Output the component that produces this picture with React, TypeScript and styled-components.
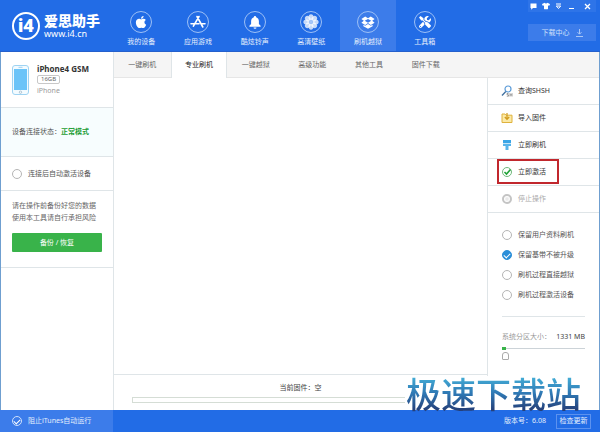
import React from "react";
import styled, { createGlobalStyle, css } from "styled-components";
import { FaApple, FaTools, FaTshirt } from "react-icons/fa";

const BLUE = "#226ce6";
const BLUE_LIGHT = "#3c7cea";
const LINE = "#dfe5e8";

const GlobalStyle = createGlobalStyle`
  * { box-sizing: border-box; }
  body {
    margin: 0;
    background: #fff;
    color: #444;
    font: 7px/12px "Noto Sans", "Noto Sans CJK SC", sans-serif;
  }
  button, input { font: inherit; color: inherit; margin: 0; }
  button { border: 0; padding: 0; background: none; cursor: pointer; }
  svg { display: block; flex: none; }
`;

const Window = styled.div`
  position: relative;
  display: flex;
  flex-direction: column;
  min-height: 100vh;
`;

/* ---------- header ---------- */
const Header = styled.header`
  display: grid;
  grid-template-columns: 113px 340px 1fr;
  height: 52px;
  background: ${BLUE};
  color: #fff;
  border-bottom: 1px solid #2560cc;
`;

const Brand = styled.a`
  display: flex;
  align-items: center;
  gap: 4px;
  padding-left: 12px;
  color: #fff;
  text-decoration: none;
`;

const BrandMark = styled.span`
  display: grid;
  place-items: center;
  width: 28px;
  height: 28px;
  flex: none;
  border: 2px solid #fff;
  border-radius: 50%;
  font: 900 19px/22px Roboto, "Noto Sans", sans-serif;
`;

const BrandText = styled.span`
  display: flex;
  flex-direction: column;
`;

const BrandName = styled.strong`
  font-size: 14px;
  line-height: 15px;
  font-weight: 900;
  white-space: nowrap;
`;

const BrandSite = styled.span`
  font-size: 9px;
  line-height: 11px;
`;

const MainNav = styled.nav`
  display: grid;
  grid-template-columns: repeat(6, 1fr);
`;

const NavItem = styled.button<{ $active?: boolean }>`
  display: flex;
  flex-direction: column;
  align-items: center;
  gap: 3px;
  padding-top: 11px;
  color: #e4eefc;
  background: ${(p) => (p.$active ? BLUE_LIGHT : "transparent")};
`;

const Ring = styled.span`
  display: grid;
  place-items: center;
  width: 22px;
  height: 22px;
  border: 1px solid #9dc0f6;
  border-radius: 50%;
  color: #fff;
`;

const HeaderSide = styled.div`
  display: flex;
  flex-direction: column;
  align-items: flex-end;
  gap: 12px;
  padding-right: 4px;
`;

const WindowControls = styled.div`
  display: flex;
  justify-content: space-between;
  align-items: center;
  width: 68px;
  height: 12px;
  padding: 0 4px 0 1px;
  background: #2e74e8;
`;

const ControlButton = styled.button<{ $apart?: boolean }>`
  display: grid;
  place-items: center;
  width: 9px;
  height: 12px;
  color: #fff;
  margin-left: ${(p) => (p.$apart ? "4px" : "0")};
`;

const DownloadButton = styled.button`
  display: flex;
  align-items: center;
  justify-content: center;
  gap: 6px;
  width: 68px;
  height: 17px;
  background: ${BLUE_LIGHT};
  color: #d0e1fb;
`;

/* ---------- body ---------- */
const Body = styled.div`
  flex: 1;
  display: grid;
  grid-template-columns: 113px 1fr;
  border: solid #6f9fd0;
  border-width: 0 1px;
`;

const Sidebar = styled.aside`
  border-right: 1px solid ${LINE};
`;

const sideBlock = css`
  padding: 0 11px;
  border-bottom: 1px solid ${LINE};
`;

const Device = styled.section`
  ${sideBlock}
  display: flex;
  align-items: center;
  gap: 8px;
  height: 56px;
`;

const DeviceInfo = styled.div`
  display: flex;
  flex-direction: column;
  align-items: flex-start;
`;

const DeviceName = styled.strong`
  font-size: 8px;
  line-height: 12px;
  color: #333;
`;

const Capacity = styled.span`
  padding: 0 3px;
  border: 1px solid #c8c8c8;
  border-radius: 2px;
  font-size: 6px;
  line-height: 7px;
  color: #666;
`;

const DeviceKind = styled.span`
  color: #999;
  line-height: 13px;
`;

const Status = styled.section`
  ${sideBlock}
  display: flex;
  align-items: center;
  height: 49px;
  background: #f7fdfe;
  color: #555;
`;

const StatusValue = styled.strong`
  color: #1c9c33;
`;

const AutoActivate = styled.section`
  ${sideBlock}
  display: flex;
  align-items: center;
  height: 34px;
`;

const Backup = styled.section`
  ${sideBlock}
  padding-top: 9px;
  padding-bottom: 15px;
  color: #666;
`;

const Hint = styled.p`
  margin: 0 0 9px;
  white-space: nowrap;
`;

const BackupButton = styled.button`
  width: 100%;
  height: 19px;
  border-radius: 1px;
  background: #39b34a;
  color: #fff;
`;

const Check = styled.label`
  display: flex;
  align-items: center;
  gap: 6px;
  white-space: nowrap;
  color: #555;
`;

const Tick = styled.input.attrs({ type: "checkbox" })`
  appearance: none;
  display: grid;
  place-items: center;
  width: 10px;
  height: 10px;
  flex: none;
  border: 1px solid #b5b5b5;
  border-radius: 50%;
  background: #fff;
  &:checked {
    border-color: #2b8fd9;
    background: #2b8fd9;
  }
  &:checked::before {
    content: "";
    width: 5px;
    height: 3px;
    border: solid #fff;
    border-width: 0 0 1px 1px;
    rotate: -45deg;
  }
`;

const FooterTick = styled(Tick)`
  border-color: #cfe0fb;
  background: transparent;
  &:checked {
    border-color: #cfe0fb;
    background: transparent;
  }
`;

const Main = styled.main`
  display: grid;
  grid-template-columns: 1fr 112px;
  grid-template-rows: 26px 1fr;
`;

const TabBar = styled.div`
  grid-column: 1 / -1;
  display: grid;
  grid-template-columns: repeat(6, 1fr);
  padding-right: calc(100% - 340px);
  background: #f5f5f5;
  border-bottom: 1px solid #e6e6e6;
`;

const Tab = styled.button<{ $active?: boolean }>`
  height: 26px;
  color: #666;
  ${(p) =>
    p.$active &&
    css`
      background: #fff;
      color: #222;
      border: solid ${LINE};
      border-width: 0 1px;
    `}
`;

const Workspace = styled.section`
  display: flex;
  flex-direction: column;
`;

const Canvas = styled.div`
  flex: 1;
`;

const FirmwareBar = styled.div`
  display: flex;
  flex-direction: column;
  align-items: center;
  gap: 3px;
  height: 36px;
  padding: 7px 18px 0;
  border-top: 1px solid ${LINE};
`;

const Progress = styled.progress`
  appearance: none;
  display: block;
  width: 100%;
  height: 6px;
  border: 1px solid #d5ddd5;
  background: #fff;
  &::-webkit-progress-bar { background: #fff; }
  &::-webkit-progress-value { background: #39b34a; }
`;

const Tools = styled.aside`
  border-left: 1px solid ${LINE};
`;

const ToolButton = styled.button<{ $marked?: boolean }>`
  position: relative;
  display: flex;
  align-items: center;
  gap: 5px;
  width: 100%;
  height: 27px;
  padding-left: 13px;
  border-bottom: 1px solid ${LINE};
  color: #333;
  &:disabled { color: #aaa; cursor: default; }
  ${(p) =>
    p.$marked &&
    css`
      &::after {
        content: "";
        position: absolute;
        inset: 0 40px 1px 9px;
        border: 2px solid #c1272d;
      }
    `}
`;

const Options = styled.div`
  display: flex;
  flex-direction: column;
  gap: 8px;
  margin: 0 14px;
  padding: 16px 0 15px;
  border-bottom: 1px solid ${LINE};
`;

const Partition = styled.div`
  display: flex;
  flex-direction: column;
  margin: 0 14px;
  padding-top: 14px;
`;

const PartitionLabel = styled.label`
  display: flex;
  justify-content: space-between;
  color: #999;
  white-space: nowrap;
`;

const PartitionValue = styled.output`
  color: #444;
`;

const Slider = styled.input.attrs({ type: "range" })`
  appearance: none;
  width: 100%;
  height: 20px;
  background: linear-gradient(90deg, #39b34a 4px, transparent 4px) 0 4px / 100% 3px no-repeat,
    linear-gradient(#ccd3d8, #ccd3d8) 0 5px / 100% 1px no-repeat;
  &::-webkit-slider-thumb {
    appearance: none;
    width: 7px;
    height: 8px;
    margin-top: 6px;
    border: 1px solid #aaa;
    border-radius: 3px 3px 1px 1px;
    background: #fff;
  }
`;

/* ---------- footer ---------- */
const Footer = styled.footer`
  display: grid;
  grid-template-columns: 113px 1fr;
  height: 22px;
  background: ${BLUE};
  color: #e4eefc;
`;

const FooterLeft = styled.div`
  display: flex;
  align-items: center;
  padding-left: 12px;
  background: ${BLUE_LIGHT};
  label { color: #e4eefc; }
`;

const FooterRight = styled.div`
  display: flex;
  align-items: center;
  justify-content: flex-end;
  gap: 10px;
  padding-right: 9px;
`;

const UpdateButton = styled.button`
  width: 35px;
  height: 15px;
  border: 1px solid #5c92ef;
  white-space: nowrap;
`;

const Watermark = styled.div`
  position: absolute;
  right: 18px;
  bottom: 22px;
  height: 34px;
  padding: 0 1px;
  background: #fff;
  font: 500 35px/34px "Noto Sans CJK SC", sans-serif;
  white-space: nowrap;
  pointer-events: none;
`;

const WatermarkText = styled.span`
  color: transparent;
  background: linear-gradient(#43add6 20%, #2f78b4 52%, #253f78 85%);
  background-clip: text;
`;

/* ---------- icons ---------- */
const AppsIcon = () => (
  <svg width="16" height="14" viewBox="0 0 16 14" fill="none" stroke="#fff" strokeWidth="1.6" strokeLinecap="round">
    <path d="M7 1.5 12.8 12M9 1.5 3.4 11.2M1 8.8h8M12 8.8h3" />
  </svg>
);
const BellIcon = () => (
  <svg width="12" height="13" viewBox="0 0 12 13" fill="#fff">
    <path d="M6 0a1.2 1.2 0 0 0-1.2 1.2C3 1.8 2.1 3.400 2.100 5.300V8L.4 9.800v1h11.200v-1L9.900 8V5.300c0-1.900-.9-3.500-2.700-4.100A1.200 1.200 0 0 0 6 0ZM4.500 11.500a1.500 1.300 0 0 0 3 0Z" />
  </svg>
);
const FlowerIcon = () => (
  <svg width="16" height="16" viewBox="-7 -7 14 14" fill="#fff">
    {[0, 45, 90, 135, 180, 225, 270, 315].map((a) => (
      <ellipse key={a} cx="0" cy="-4" rx="2.2" ry="2.7" transform={`rotate(${a})`} opacity=".75" />
    ))}
    <circle r="1.8" fill="#a5c6f8" />
  </svg>
);
const BoxIcon = () => (
  <svg width="14" height="13" viewBox="0 0 14 13" fill="#fff">
    <path d="M4.200.4 7 2.300 9.800.4 13.600 2.900 11.200 4.800 13.600 6.700 9.800 9 7 7 4.200 9 .4 6.700 2.800 4.800.4 2.900Z" />
    <path d="M7 2.900 3.700 4.800 7 6.700l3.300-1.900Z" fill={BLUE_LIGHT} />
    <path d="M2.400 8.700 4.200 9.800 7 7.900l2.800 1.900 1.800-1.100v1.500L7 12.800 2.400 10.200Z" />
  </svg>
);
const ChatIcon = () => (
  <svg width="7" height="7" viewBox="0 0 7 7" fill="#fff"><path d="M.5.5h6v4.500H3L1.200 6.800V5H.5Z" /></svg>
);
const MenuIcon = () => (
  <svg width="7" height="7" viewBox="0 0 7 7" fill="none" stroke="#fff"><path d="M1 1h5M1.300 3h4.400L3.500 5.500Z" /></svg>
);
const MinIcon = () => (
  <svg width="7" height="7" viewBox="0 0 7 7" stroke="#fff"><path d="M1 5.500h5" /></svg>
);
const CloseIcon = () => (
  <svg width="7" height="7" viewBox="0 0 7 7" stroke="#fff" strokeWidth="1.300"><path d="m1 1 5 5M6 1 1 6" /></svg>
);
const DownIcon = () => (
  <svg width="7" height="8" viewBox="0 0 7 8" fill="none" stroke="#a9c7f7"><path d="M3.500 0v5M1.500 3.200l2 2 2-2M0 7.500h7" /></svg>
);
const PhoneIcon = () => (
  <svg width="17" height="30" viewBox="0 0 17 30">
    <rect x=".5" y=".5" width="16" height="29" rx="2.500" fill="#f3fbff" stroke="#9fd3f2" />
    <rect x="2" y="4" width="13" height="21" fill="#6cc4f8" />
    <path d="M6.500 2.300h4" stroke="#9fd3f2" />
    <circle cx="8.500" cy="27.200" r="1.200" fill="none" stroke="#9fb8c8" strokeWidth=".8" />
  </svg>
);
const SearchIcon = () => (
  <svg width="12" height="12" viewBox="0 0 12 12" fill="none">
    <circle cx="7" cy="4" r="3" stroke="#5b9bd8" strokeWidth="1.200" />
    <path d="M4.800 6.500 1 10.500" stroke="#3f6f9f" strokeWidth="1.300" />
    <path d="M7.500 8.500H6v1.300h1.500v1.400H5.800M9 8.200v3.300M11 8.200v3.300M9 9.900h2" stroke="#777" strokeWidth=".7" />
  </svg>
);
const ImportIcon = () => (
  <svg width="12" height="12" viewBox="0 0 12 12">
    <path d="M1 2h3l1 1.200h6V10.500H1Z" fill="#fbe9a6" stroke="#dfb23c" />
    <path d="M6 1v5.500M3.800 5 6 7.400 8.200 5" fill="none" stroke="#d09a1c" strokeWidth="1.200" />
  </svg>
);
const BrushIcon = () => (
  <svg width="12" height="12" viewBox="0 0 12 12" fill="#3aa5e6">
    <path d="M2 1h8v3.300H2Z" /><path d="M2 5h8v2H7.500v4h-3V7H2Z" fill="#58b4ea" />
  </svg>
);
const ActivateIcon = () => (
  <svg width="12" height="12" viewBox="0 0 12 12" fill="none">
    <circle cx="6" cy="6" r="4.500" stroke="#6fb87b" />
    <path d="m3.500 6 2 2 4-4.500" stroke="#1ea336" strokeWidth="1.600" />
  </svg>
);
const StopIcon = () => (
  <svg width="12" height="12" viewBox="0 0 12 12" fill="none" stroke="#c4c4c4">
    <circle cx="6" cy="6" r="4" strokeWidth="2" /><rect x="5" y="5" width="2" height="2" stroke="#e2e2e2" />
  </svg>
);

const navItems = [
  { label: "我的设备", icon: <FaApple size={14} /> },
  { label: "应用游戏", icon: <AppsIcon /> },
  { label: "酷炫铃声", icon: <BellIcon /> },
  { label: "高清壁纸", icon: <FlowerIcon /> },
  { label: "刷机越狱", icon: <BoxIcon />, active: true },
  { label: "工具箱", icon: <FaTools size={12} /> },
];
const tabs = ["一键刷机", "专业刷机", "一键越狱", "高级功能", "其他工具", "固件下载"];
const tools = [
  { label: "查询SHSH", icon: <SearchIcon /> },
  { label: "导入固件", icon: <ImportIcon /> },
  { label: "立即刷机", icon: <BrushIcon /> },
  { label: "立即激活", icon: <ActivateIcon />, marked: true },
  { label: "停止操作", icon: <StopIcon />, disabled: true },
];
const options = [
  { label: "保留用户资料刷机", on: false },
  { label: "保留基带不被升级", on: true },
  { label: "刷机过程直接越狱", on: false },
  { label: "刷机过程激活设备", on: false },
];

export default function App() {
  return (
    <Window>
      <GlobalStyle />
      <Header>
        <Brand href="#">
          <BrandMark>i4</BrandMark>
          <BrandText>
            <BrandName>爱思助手</BrandName>
            <BrandSite>www.i4.cn</BrandSite>
          </BrandText>
        </Brand>
        <MainNav>
          {navItems.map((n) => (
            <NavItem key={n.label} $active={n.active}>
              <Ring>{n.icon}</Ring>
              {n.label}
            </NavItem>
          ))}
        </MainNav>
        <HeaderSide>
          <WindowControls>
            <ControlButton aria-label="反馈"><ChatIcon /></ControlButton>
            <ControlButton aria-label="皮肤"><FaTshirt size={8} /></ControlButton>
            <ControlButton aria-label="菜单"><MenuIcon /></ControlButton>
            <ControlButton aria-label="最小化"><MinIcon /></ControlButton>
            <ControlButton aria-label="关闭" $apart><CloseIcon /></ControlButton>
          </WindowControls>
          <DownloadButton>下载中心<DownIcon /></DownloadButton>
        </HeaderSide>
      </Header>

      <Body>
        <Sidebar>
          <Device>
            <PhoneIcon />
            <DeviceInfo>
              <DeviceName>iPhone4 GSM</DeviceName>
              <Capacity>16GB</Capacity>
              <DeviceKind>iPhone</DeviceKind>
            </DeviceInfo>
          </Device>
          <Status>设备连接状态：<StatusValue>正常模式</StatusValue></Status>
          <AutoActivate>
            <Check><Tick />连接后自动激活设备</Check>
          </AutoActivate>
          <Backup>
            <Hint>请在操作前备份好您的数据<br />使用本工具请自行承担风险</Hint>
            <BackupButton>备份 / 恢复</BackupButton>
          </Backup>
        </Sidebar>

        <Main>
          <TabBar role="tablist">
            {tabs.map((t, i) => (
              <Tab key={t} role="tab" aria-selected={i === 1} $active={i === 1}>{t}</Tab>
            ))}
          </TabBar>
          <Workspace>
            <Canvas />
            <FirmwareBar>
              <span>当前固件：空</span>
              <Progress value={0} max={100} aria-label="当前固件" />
            </FirmwareBar>
          </Workspace>
          <Tools>
            {tools.map((t) => (
              <ToolButton key={t.label} disabled={t.disabled} $marked={t.marked}>
                {t.icon}
                {t.label}
              </ToolButton>
            ))}
            <Options>
              {options.map((o) => (
                <Check key={o.label}><Tick defaultChecked={o.on} />{o.label}</Check>
              ))}
            </Options>
            <Partition>
              <PartitionLabel htmlFor="partition">
                系统分区大小：<PartitionValue>1331 MB</PartitionValue>
              </PartitionLabel>
              <Slider id="partition" min={0} max={100} defaultValue={0} />
            </Partition>
          </Tools>
        </Main>
      </Body>

      <Footer>
        <FooterLeft>
          <Check><FooterTick defaultChecked />阻止iTunes自动运行</Check>
        </FooterLeft>
        <FooterRight>
          <span>版本号：6.08</span>
          <UpdateButton>检查更新</UpdateButton>
        </FooterRight>
      </Footer>
      <Watermark><WatermarkText>极速下载站</WatermarkText></Watermark>
    </Window>
  );
}
